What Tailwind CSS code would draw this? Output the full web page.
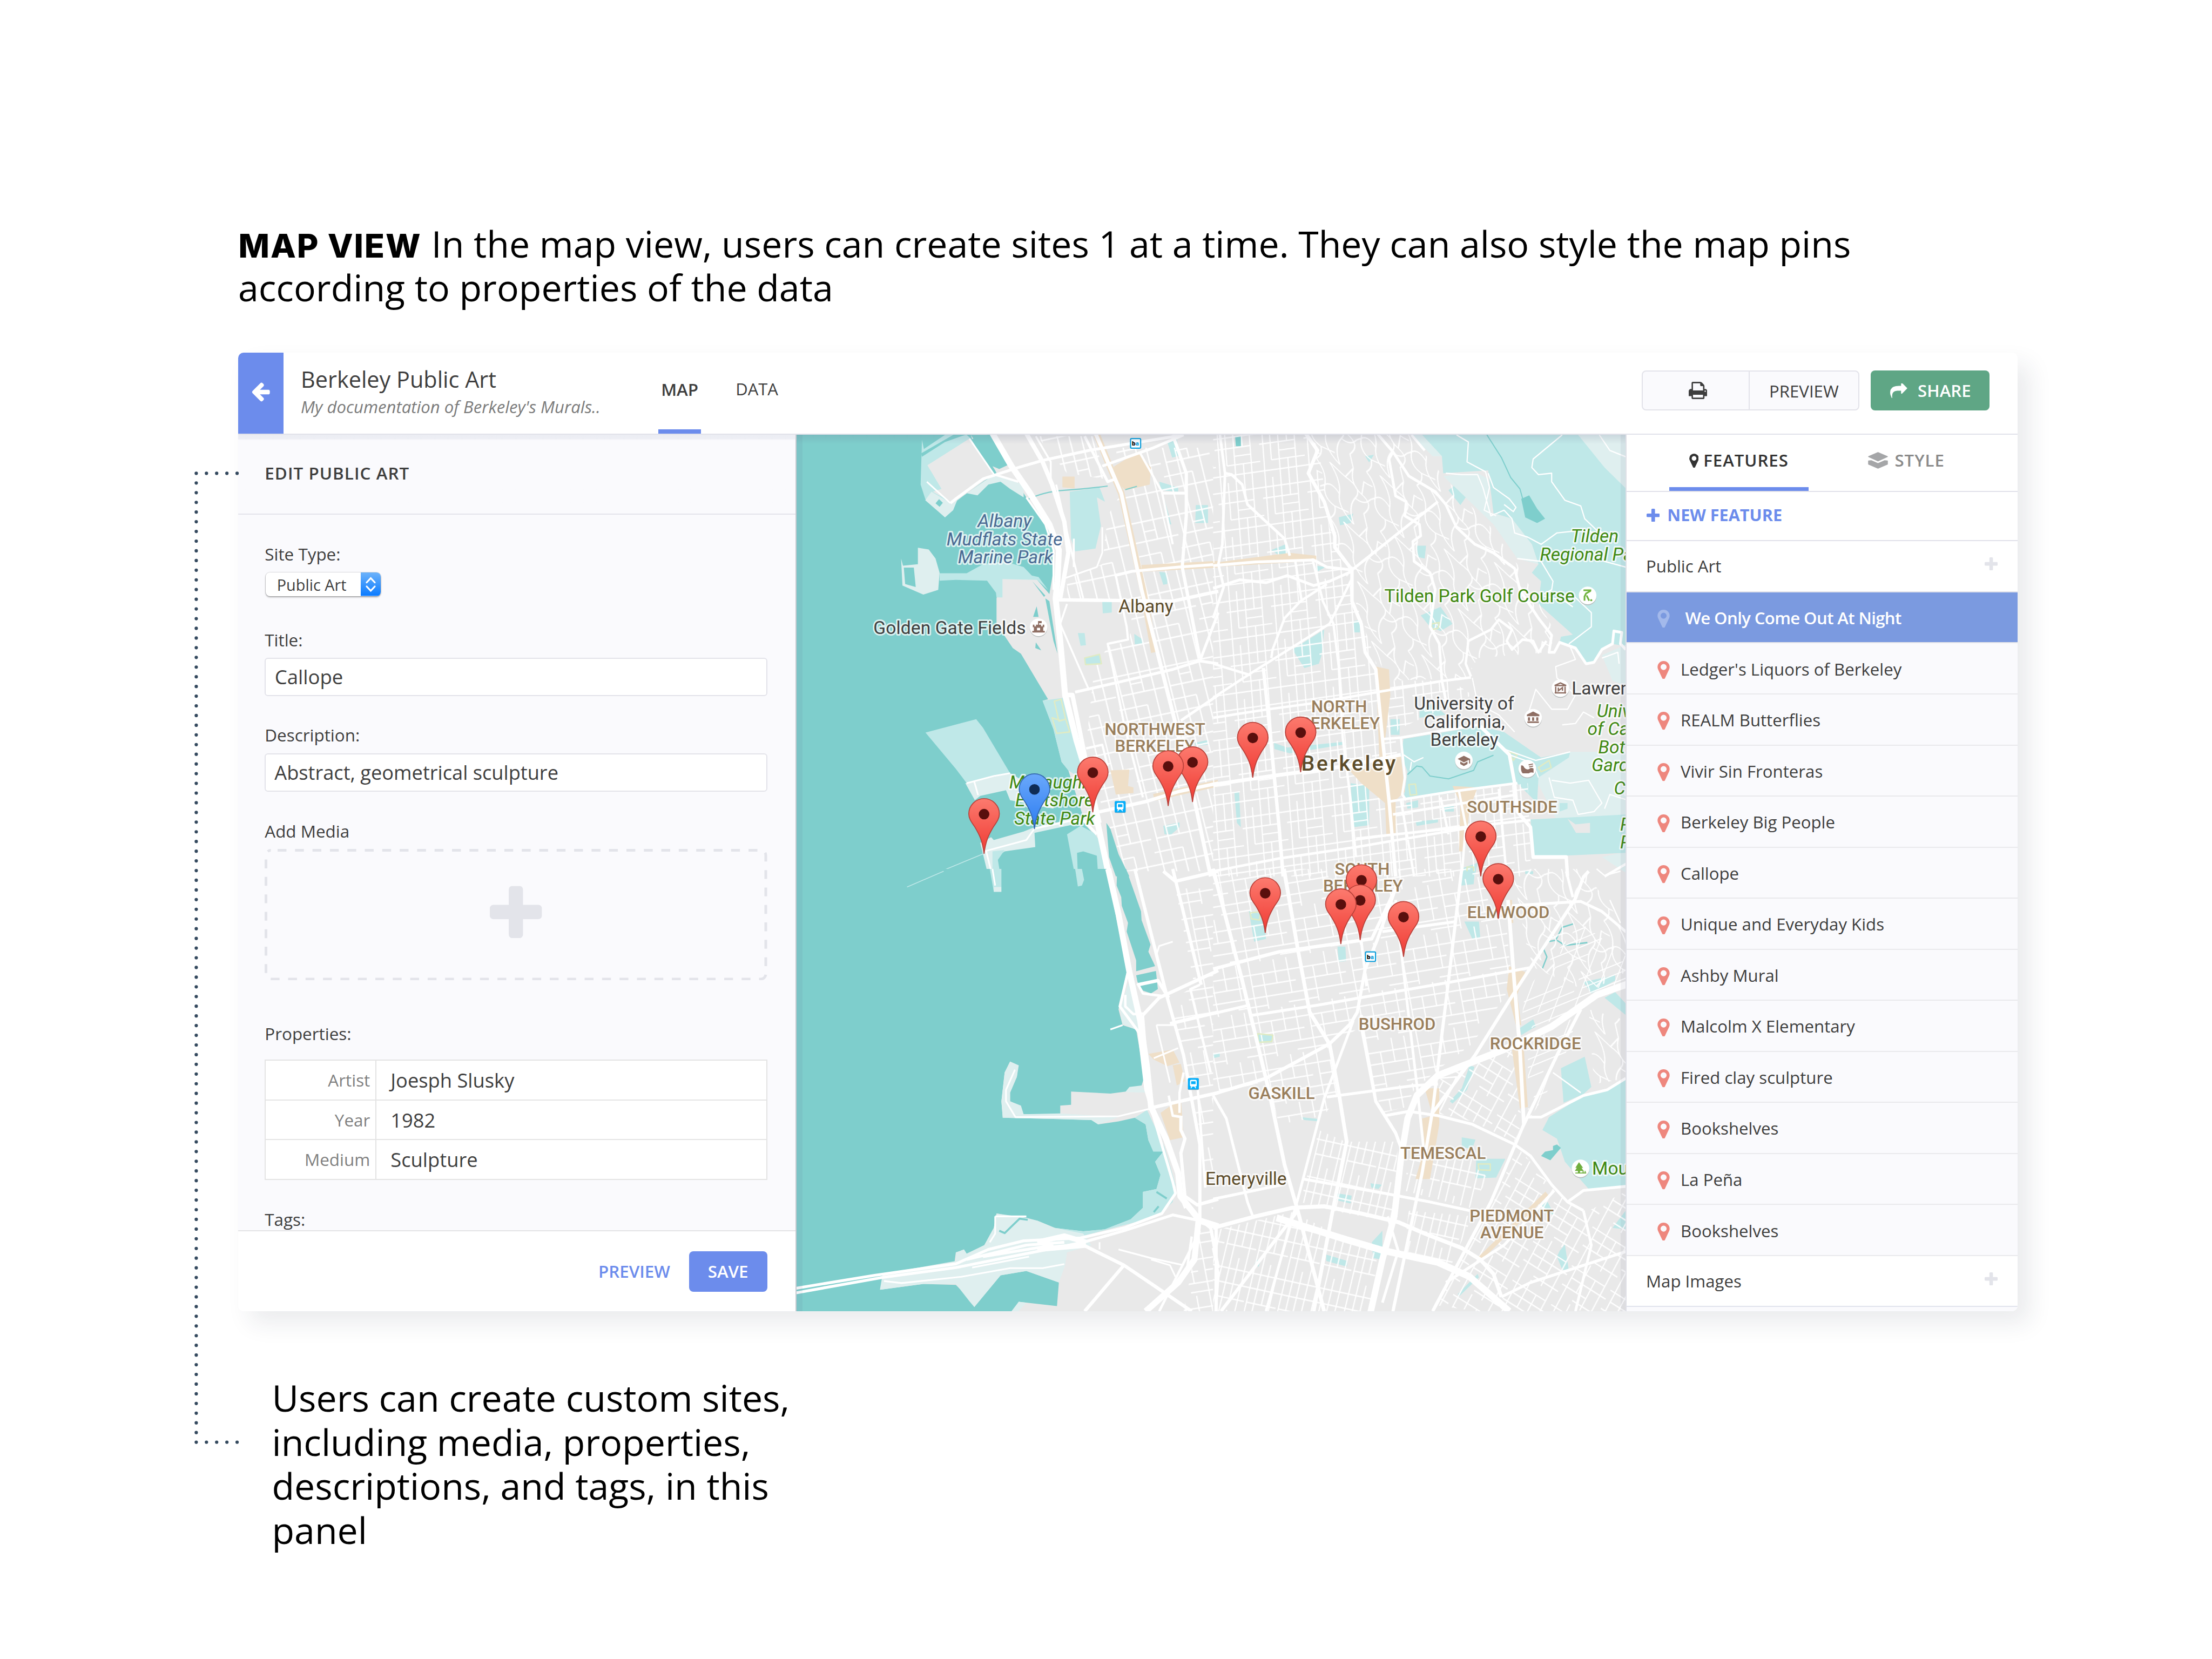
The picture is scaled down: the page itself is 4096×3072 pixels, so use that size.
<!DOCTYPE html>
<html lang="en">
<head>
<meta charset="utf-8">
<title>Berkeley Public Art</title>
<script src="https://cdn.jsdelivr.net/npm/@tailwindcss/browser@4"></script>
</head>
<body class="bg-white">
<svg class="hidden">
  <symbol id="marker" viewBox="0 128 1024 1536"><path fill="currentColor" d="M768 640q0-106-75-181t-181-75-181 75-75 181 75 181 181 75 181-75 75-181zm256 0q0 109-33 179l-364 774q-16 33-47.5 52t-67.5 19-67.5-19-46.5-52l-365-774q-33-70-33-179 0-212 150-362t362-150 362 150 150 362z"/></symbol>
  <symbol id="plus" viewBox="192 128 1408 1408"><path fill="currentColor" d="M1600 736v192q0 40-28 68t-68 28h-416v416q0 40-28 68t-68 28h-192q-40 0-68-28t-28-68v-416h-416q-40 0-68-28t-28-68v-192q0-40 28-68t68-28h416v-416q0-40 28-68t68-28h192q40 0 68 28t28 68v416h416q40 0 68 28t28 68z"/></symbol>
</svg>
<div class="relative w-[4096px] h-[3072px] overflow-hidden bg-white font-['Open_Sans',sans-serif] text-[#3e3e3e]">
  <!-- dotted connector between the edit panel and its caption -->
  <svg class="absolute left-[355px] top-[868px] w-[92px] h-[1812px]" viewBox="355 868 92 1812" fill="none" stroke="#34495e" stroke-width="6.2" stroke-linecap="round"><path d="M363.4 876.4V2671" stroke-dasharray="0.01 17.932"/><path d="M382.3 876.4H440M382.3 2670.5H440" stroke-dasharray="0.01 18.9"/></svg>

  <div class="flex flex-col pl-[441px] pt-[409.7px]">
    <h1 class="w-[3150px] h-[163.2px] text-[68px] leading-[81.6px] font-normal text-black whitespace-nowrap"><span class="font-['Inter',sans-serif] font-extrabold text-[61px] leading-0 tracking-[1.9px] ml-[0.5px] inline-block w-[339.500px]">MAP VIEW</span> In the map view, users can create sites 1 at a time. They can also style the map pins<br>according to properties of the data</h1>

    <main class="mt-[80.300px] w-[3294.5px] h-[1775.3px] rounded-[10px] bg-white shadow-[22px_22px_44px_rgba(30,38,60,0.095)]">
      <div class="w-full h-full rounded-[10px] overflow-hidden flex flex-col">
        <header class="relative z-10 flex items-stretch h-[152px] border-b-[2.4px] border-[#e1e2ea] bg-white shrink-0">
          <a class="w-[84px] bg-[#6c8cec] text-white flex items-center justify-center pb-[4px]"><svg class="w-[34.5px] h-[36px]" viewBox="192 154 1472 1612"><path fill="currentColor" d="M1664 896v128q0 53-32.5 90.5t-84.5 37.5h-704l293 294q38 36 38 90t-38 90l-75 76q-37 37-90 37-52 0-91-37l-651-652q-37-37-37-90 0-52 37-91l651-650q38-38 91-38 52 0 90 38l75 74q38 38 38 91t-38 91l-293 293h704q52 0 84.5 37.5t32.5 90.5z"/></svg></a>
          <div class="pl-[32px] pt-[25px] w-[667px] whitespace-nowrap">
            <div class="text-[41.4px] leading-[48px]">Berkeley Public Art</div>
            <div class="mt-[7px] text-[31.1px] leading-[40px] italic text-[#7b7b7b]">My documentation of Berkeley's Murals..</div>
          </div>
          <nav class="flex text-[31.4px] pl-[27.2px]">
            <a class="w-[79px] border-b-[8px] border-[#6c8cec] flex items-center justify-center font-semibold pb-[7px]">MAP</a>
            <a class="ml-[64px] flex items-center pb-[15px] text-[31px]">DATA</a>
          </nav>
          <div class="ml-auto mr-[52px] mt-[33.2px] h-[74.1px] flex text-[31.2px]">
            <div class="flex border-[2.4px] border-[#e3e3ea] rounded-[8px] bg-[#fafafd] w-[403.5px]">
              <div class="w-[198px] border-r-[2.4px] border-[#e3e3ea] flex items-center justify-center pl-[9px]"><svg class="w-[34.5px] h-[32px]" viewBox="64 128 1664 1536"><path fill="currentColor" d="M448 1536h896v-256h-896v256zm0-640h896v-384h-160q-40 0-68-28t-28-68v-160h-640v640zm1152 64q0-26-19-45t-45-19-45 19-19 45 19 45 45 19 45-19 19-45zm128 0v416q0 13-9.5 22.5t-22.5 9.5h-224v160q0 40-28 68t-68 28h-960q-40 0-68-28t-28-68v-160h-224q-13 0-22.5-9.5t-9.5-22.5v-416q0-79 56.5-135.5t135.5-56.5h64v-544q0-40 28-68t68-28h672q40 0 88 20t76 48l152 152q28 28 48 76t20 88v256h64q79 0 135.5 56.5t56.5 135.5z"/></svg></div>
              <div class="flex-1 flex items-center justify-center pt-px">PREVIEW</div>
            </div>
            <div class="ml-[21px] w-[219.4px] rounded-[8px] bg-[#5fa685] text-white font-semibold flex items-center pl-[36px]"><svg class="w-[31.5px] h-[27px]" viewBox="0 128 1792 1536"><path fill="currentColor" d="M1792 640q0 26-19 45l-512 512q-19 19-45 19t-45-19-19-45v-256h-224q-98 0-175.5 6t-154 21.5-133 42.5-105.5 69.5-80 101-48.5 138.5-17.5 181q0 55 5 123 0 6 2.5 23.5t2.5 26.5q0 15-8.5 25t-23.5 10q-16 0-28-17-7-9-13-22t-13.5-30-10.5-24q-127-285-127-451 0-199 53-333 162-403 875-403h224v-256q0-26 19-45t45-19 45 19l512 512q19 19 19 45z"/></svg><span class="ml-[19.5px]">SHARE</span></div>
          </div>
        </header>

        <div class="flex flex-1 min-h-0">
          <!-- edit panel -->
          <section class="w-[1034px] border-r-[2.6px] border-[#c9cbd1] bg-[#fafafd] flex flex-col shrink-0">
            <div class="h-[147.7px] border-b-[2.4px] border-[#e4e4eb] pl-[49.3px] flex items-center pb-[4px] text-[31.4px] font-semibold tracking-[1.03px] bg-linear-to-b from-[#ebedf3] from-0% via-[#edeef4] via-5% to-[#fafafd] to-7% shrink-0">EDIT PUBLIC ART</div>
            <form class="flex-1 min-h-0 overflow-hidden pl-[49.3px] w-[980px] pt-[53.500px] text-[31.4px] leading-[40px]">
              <div>Site Type:</div>
              <div class="ml-[1.500px] mt-[14px] w-[213.3px] h-[43.5px] bg-white rounded-[8px] shadow-[0_2px_3px_rgba(0,0,0,0.3),0_0_0_1px_rgba(0,0,0,0.12)] flex overflow-hidden">
                <span class="w-[176.3px] pl-[21px] text-[28.8px] leading-[46px]">Public Art</span>
                <svg class="w-[37px] h-[43.5px]" viewBox="0 0 37 43.5"><defs><linearGradient id="sel" x2="0" y2="1"><stop stop-color="#6cb2fa"/><stop offset="1" stop-color="#0a7bff"/></linearGradient></defs><path fill="url(#sel)" d="M0 0h37v43.500h-37z"/><path d="M11 18.500l7.500-8 7.500 8M11 26l7.500 8 7.500-8" fill="none" stroke="#fff" stroke-width="3.200" stroke-linecap="round"/></svg>
              </div>
              <div class="mt-[61.1px]">Title:</div>
              <div class="mt-[13.1px] h-[70.8px] border-[2.4px] border-[#e3e3ea] rounded-[6px] bg-white pl-[16.500px] pb-[1px] flex items-center text-[36.5px]">Callope</div>
              <div class="mt-[52.4px]">Description:</div>
              <div class="mt-[13.6px] h-[70.8px] border-[2.4px] border-[#e3e3ea] rounded-[6px] bg-white pl-[16px] pb-[1px] flex items-center text-[36.2px]">Abstract, geometrical sculpture</div>
              <div class="mt-[53.4px]">Add Media</div>
              <div class="mt-[12.6px] h-[243.4px] text-[#e3e4ea]"><svg class="w-[930.5px] h-[243.4px]" viewBox="0 0 930.5 243.4"><rect x="2.500" y="2.500" width="925.500" height="238.400" rx="9" fill="none" stroke="#e3e4ea" stroke-width="5" stroke-dasharray="16.400 15.900" stroke-dashoffset="-12.500"/><use href="#plus" x="416.900" y="68.400" width="96.700" height="96.700"/></svg></div>
              <div class="mt-[78.500px]">Properties:</div>
              <div class="mt-[28.600px] w-[930.5px] bg-white border-t-[2.4px] border-x-[2.4px] border-[#e4e4e4]">
                <div class="flex h-[73.7px] border-b-[2.4px] border-[#e4e4e4] items-stretch"><span class="w-[205px] border-r-[2px] border-[#e4e4e4] pr-[10px] flex items-center justify-end text-[#808080]">Artist</span><span class="pl-[26px] flex items-center text-[36.3px]">Joesph Slusky</span></div>
                <div class="flex h-[73.7px] border-b-[2.4px] border-[#e4e4e4] items-stretch"><span class="w-[205px] border-r-[2px] border-[#e4e4e4] pr-[10px] flex items-center justify-end text-[#808080]">Year</span><span class="pl-[26px] flex items-center text-[36.3px]">1982</span></div>
                <div class="flex h-[73.7px] border-b-[2.4px] border-[#e4e4e4] items-stretch"><span class="w-[205px] border-r-[2px] border-[#e4e4e4] pr-[10px] flex items-center justify-end text-[#808080]">Medium</span><span class="pl-[26px] flex items-center text-[36.3px]">Sculpture</span></div>
              </div>
              <div class="mt-[52.5px]">Tags:</div>
            </form>
            <div class="h-[150.8px] border-t-[2.4px] border-[#e4e4e6] bg-white flex items-center justify-end pr-[52.500px] text-[31.3px] font-semibold shrink-0">
              <span class="text-[#6c8cec]">PREVIEW</span>
              <span class="ml-[35px] w-[144.7px] h-[74.9px] rounded-[8px] bg-[#6c8cec] text-white flex items-center justify-center">SAVE</span>
            </div>
          </section>

          <!-- map -->
          <section class="relative w-[1535px] shrink-0 overflow-hidden bg-[#7ececc]">
            <svg class="w-[1535px] h-[1623.7px] block" viewBox="1536.500 838 1599 1691.500" preserveAspectRatio="none" font-family="Roboto, sans-serif">
              <defs>
                <pattern id="g1" width="180" height="250" patternUnits="userSpaceOnUse" patternTransform="matrix(1 -0.2 0.26 1 0 0)"><path d="M20 0V250M62 0V250M104 0V118M104 165V250M142 0V250M0 50H180M20 118H180M0 165H104M0 208H180M62 85H104" fill="none" stroke="#fff" stroke-width="5"/></pattern>
                <pattern id="g2" width="168" height="190" patternUnits="userSpaceOnUse" patternTransform="matrix(1 -0.13 0.08 1 0 0)"><path d="M14 0V190M42 0V130M72 0V190M104 0V70M104 130V190M134 0V190M0 32H168M0 70H134M42 130H168M0 165H168M72 100H134" fill="none" stroke="#fff" stroke-width="4.500"/></pattern>
                <pattern id="g3" width="190" height="165" patternUnits="userSpaceOnUse" patternTransform="matrix(1 -0.15 0.2 1 0 0)"><path d="M18 0V122M66 0V165M112 42V165M160 0V82M0 42H190M66 82H190M0 82H40M0 122H190M0 152H112" fill="none" stroke="#fff" stroke-width="4.500"/></pattern>
                <pattern id="g4" width="190" height="170" patternUnits="userSpaceOnUse" patternTransform="matrix(1.2 -0.45 -0.5 1.2 0 0)"><path d="M25 0V170M85 0V90M85 130V170M140 0V170M0 34H140M25 68H190M0 95H190M85 130H190" fill="none" stroke="#fff" stroke-width="3.800"/></pattern>
                <pattern id="g7" width="170" height="150" patternUnits="userSpaceOnUse" patternTransform="matrix(0.86 0.5 -0.52 0.9 0 0)"><path d="M20 0V150M62 0V105M104 35V150M145 0V150M0 35H145M20 70H170M0 105H104M62 135H170" fill="none" stroke="#fff" stroke-width="4.500"/></pattern>
                <pattern id="g5" width="120" height="180" patternUnits="userSpaceOnUse" patternTransform="matrix(1 0.2 -0.26 1 0 0)"><path d="M10 0V180M38 0V180M66 0V140M96 0V180M0 40H120M0 90H120M10 140H120" fill="none" stroke="#fff" stroke-width="4.500"/></pattern>
                <pattern id="g6" width="190" height="210" patternUnits="userSpaceOnUse" patternTransform="matrix(1 0.25 0.25 1 0 0)"><path d="M10 0Q40 40 20 90T40 160Q40 190 10 210M60 0Q90 60 70 110T100 210M100 210Q90 150 130 110T110 40L60 0M150 0Q120 60 160 90T150 160L150 210M20 90Q50 70 70 110M130 110Q160 130 190 100M0 100L20 90M40 160L90 170M110 40Q130 20 150 0M160 90L180 40L190 45M0 45L20 50" fill="none" stroke="#fff" stroke-width="4.500" stroke-linejoin="round"/></pattern>
                <linearGradient id="red" x2="0" y2="1"><stop stop-color="#fc7a6e"/><stop offset="1" stop-color="#ef3a33"/></linearGradient>
                <linearGradient id="blue" x2="0" y2="1"><stop stop-color="#6aa8fb"/><stop offset="1" stop-color="#2c7cf0"/></linearGradient>
                <linearGradient id="hs" x2="0" y2="1"><stop stop-color="#5a5f80" stop-opacity=".16"/><stop offset="1" stop-color="#5a5f80" stop-opacity="0"/></linearGradient>
                <g id="pr"><path d="M0 0C-3-25-9-37-18-52C-25-62-29.500-68-29.500-77A29.500 29.500 0 0 1 29.500-77C29.500-68 25-62 18-52C9-37 3-25 0 0Z" fill="url(#red)" stroke="#b9413a" stroke-width="1.800"/><circle cy="-76.500" r="10.200" fill="#590f0d"/></g>
                <g id="pb"><path d="M0 0C-3-25-9-37-18-52C-25-62-29.500-68-29.500-77A29.500 29.500 0 0 1 29.500-77C29.500-68 25-62 18-52C9-37 3-25 0 0Z" fill="url(#blue)" stroke="#3467b0" stroke-width="1.800"/><circle cy="-76.500" r="10.200" fill="#0f2c55"/></g>
                <g id="bus"><rect x="-10.500" y="-10" width="21" height="22" rx="2" fill="#8fa3ad"/><rect x="-10.500" y="-11" width="21" height="22" rx="2" fill="#06aef9"/><rect x="-6.500" y="-7.500" width="13" height="13" rx="2.500" fill="#fff"/><rect x="-4.300" y="-4.800" width="8.600" height="5.500" fill="#06aef9"/><path d="M-5 8.500l2.500-3M5 8.500l-2.500-3" stroke="#fff" stroke-width="1.600"/></g>
                <g id="bart"><rect x="-9.700" y="-9.200" width="19.400" height="18.400" rx="2" fill="#fff" stroke="#0e9fdb" stroke-width="2.300"/><text x="-7" y="4.500" font-size="12" font-weight="900">b</text><text x="0" y="4.500" font-size="12" font-weight="900" fill="#0e9fdb">a</text></g>
                <g id="disc"><circle cy="1.800" r="17" fill="#b9bdbd"/><circle r="17" fill="#fff"/></g>
              </defs>
              <path fill="#e9e9e9" d="M1536 838h1600v1692h-1600z"/>

              <!-- north-west quarter -->
              <g transform="matrix(0.52296 0 0 0.54847 1530 830)" stroke-linejoin="round">
                <path fill="#7ececc" d="M0 0H718L790 122L760 135L735 125L745 140L765 180L840 205L870 250L910 300L955 370L962 480L945 575L900 525L880 510L770 520L750 590L750 680L810 765L840 785L940 945L920 950L960 1050L990 1165L1015 1195L1060 1330L1080 1390L1120 1430L1150 1560H0Z"/>
                <path fill="#bfe8e8" d="M475 32L482 65L560 15H640L655 28L735 150L600 250L560 305L487 240L470 190ZM540 502L640 502L700 470L780 460L850 480L880 510L905 515L940 560L900 525L772 522V587H750L748 570L715 528L600 525L540 528ZM920 950L995 940L1065 1150L1070 1230L1015 1195L990 1165L960 1050ZM488 1062L675 1015L700 1045L800 1205L640 1240L600 1190ZM1010 1420L1060 1390L1110 1415L1135 1450L1160 1568H1125L1120 1495L1070 1480L1047 1485L1050 1568H1040Z"/>
                <path fill="#7ececc" d="M472 80L600 10H650L560 40L475 92Z"/>
                <path fill="#dfefef" d="M510 215L487 245L560 305L590 280L605 245L580 255ZM640 220L740 155L850 190L850 235L800 205L765 180L720 190L680 228ZM460 412L500 418L525 450L540 500L535 560L480 577L403 545L398 450L405 475L460 470ZM635 1240L800 1205L900 1260L960 1290V1330L800 1300L785 1265L690 1285L670 1300ZM690 1450L730 1430L740 1440L850 1410L890 1395L1060 1360V1380L890 1415L893 1465L780 1480L750 1500L755 1568H720Z"/>
                <path fill="#bfe8e8" d="M735 1480L780 1475L755 1510L765 1568H735Z"/>
                <path fill="#7ececc" d="M408 482H445L452 550L413 540ZM538 241L552 254L540 268L525 256ZM882 530L930 580L925 585ZM898 618L905 655H885ZM895 745L915 773L893 765ZM930 590L945 600L975 785L960 740ZM1155 1380L1170 1400L1200 1490L1240 1568H1190L1165 1500Z"/>
                <path fill="#e9e9e9" d="M495 122L650 28L738 155L700 180L590 255L515 215L547 205ZM655 15H718L660 30Z"/>
                <path fill="#7ececc" d="M655 15H718L790 122L735 125Z"/>
                <path fill="#bfe8e8" d="M1020 215L1130 200L1150 250L1120 235L1135 335L1115 415L1040 425L1025 380ZM1380 40L1415 28L1425 88L1398 95ZM1350 180L1420 200V215L1360 210L1395 330H1388ZM1485 262H1530V325H1483ZM1350 497L1380 500V540L1365 542ZM1140 600L1175 595V640L1142 643ZM1050 712H1075L1080 755L1060 757ZM1258 715L1290 735L1292 752H1260ZM1365 1390L1425 1378V1395L1395 1420H1370ZM1480 1098L1530 1088V1105L1485 1110Z"/>
                <path fill="url(#g1)" d="M1190 60H1549V1550H1230L1140 1330L1080 1110L1110 840L1160 760L1240 740L1250 640L1400 600L1010 590V520L1140 470L1160 300L1210 220ZM900 20H1110L1150 170L1010 150Z"/>
                <path fill="none" stroke="#efdfc8" d="M1120 15L1165 120L1210 220L1290 560L1332 780M1285 485L1568 470M1330 1290L1568 1240" stroke-width="24"/>
                <path fill="#efdfc8" d="M1185 125L1270 75L1320 130L1315 190L1225 210L1170 150ZM993 162H1038V203L993 200ZM1170 1195L1240 1192L1235 1250L1255 1255V1275L1190 1280Z"/>
                <path fill="#bfe8e8" stroke="#e0ebc4" stroke-width="5" d="M1075 800L1130 787L1137 820L1078 823Z"/>
                <path fill="none" stroke="#e0ebc4" stroke-width="5" d="M963 952L988 945L1005 1015L980 1022ZM955 1010L985 1020L1005 1015L1020 1060L972 1065Z"/>
                <path fill="none" stroke="#7ececc" stroke-width="4" d="M860 245Q920 215 1000 210T1160 195M1225 208L1268 196"/>
                <g fill="none" stroke="#fff">
                  <path stroke-width="22" d="M735 10L805 125L870 215L945 330L980 420L975 530L968 590L985 740L1003 930L1045 1090L1080 1200L1125 1390L1150 1500L1165 1568"/>
                  <path stroke-width="16" d="M860 10L920 110L955 190L1000 320L1015 430L985 590M1005 930L1030 930L1090 1210L1130 1380"/>
                  <path stroke-width="7" d="M860 235L930 330L960 420V560M970 190L1030 440L1070 590M1010 610L985 680L1090 910M1035 380V480M895 20L950 110V180"/>
                  <path stroke-width="14" d="M1115 10L1210 220L1285 560L1370 880L1410 1030L1450 1200L1480 1300L1540 1568"/>
                  <path stroke-width="12" d="M960 595L1150 597L1400 600L1568 565M1110 1345L1300 1305L1420 1270L1568 1240M1400 15L1450 150V300L1435 480L1500 800"/>
                  <path stroke-width="10" d="M580 255L600 240L700 170L830 130L920 105L1090 70L1440 15M1185 510L1250 495L1420 480L1568 470M1040 920L1200 885L1400 840L1500 810L1568 820M1140 125L1330 60L1440 15M1360 220H1445M1075 20L1160 180L1190 170M1430 1020L1568 930M1070 1370L1120 1420M1500 810L1568 640"/>
                  <path stroke-width="8" d="M1190 510L1230 690L1235 735L1160 750L1180 840L1220 1030L1290 1290M745 155L830 180M1080 1118L1140 1105L1160 1180M1280 80L1360 215L1400 400"/>
                  <path stroke-width="6" d="M650 28L745 160M493 180L580 255M640 1240L740 1215L800 1205M668 1235L682 1282M705 1480L860 1440L890 1400L1060 1365M712 1480L735 1568M1140 340V430L1120 480L1000 520"/>
                  <path stroke="#bfe8e8" stroke-width="3" d="M500 1568L705 1487"/>
                </g>
              </g>

              <!-- north-east quarter -->
              <g transform="matrix(0.5102 0 0 0.54847 2340 830)" stroke-linejoin="round">
                <path fill="#bfe8e8" d="M790 15H1380L1568 210V760L1510 750L1470 770L1440 820H1410L1370 765L1310 745L1315 725L1360 718L1230 610L1240 530L1205 500L1230 470L1205 400L1130 310L1060 290L1040 140L870 150L865 90Z"/>
                <path fill="#dfefef" d="M1380 15H1568V210L1480 130ZM870 160L1000 150L1040 170L1050 290L1130 310L1205 400L1230 470L1150 450L1060 330L960 240ZM750 15H790L865 90L830 90ZM1470 790L1568 750V900L1510 880ZM1210 1210L1350 1130H1568V1350L1300 1370ZM1470 1500L1568 1480V1560Z"/>
                <path fill="#bfe8e8" d="M720 1085L1010 1040L1100 1060L1240 1150L1350 1130L1345 1150L1230 1220L1225 1310L1150 1240L720 1300L735 1200L710 1140ZM1200 1368L1568 1350V1485L1215 1500ZM1310 1310L1340 1310L1340 1330L1310 1340ZM520 1240L590 1250V1388L530 1395ZM300 770L420 700L410 790L400 820L345 835ZM785 650L860 620L905 680L860 705L820 690ZM475 305L530 292L520 325L480 333ZM220 420L280 398L290 432L250 440ZM230 1098L280 1115L490 1095V1105L290 1135L232 1120ZM770 405H805L800 450L775 445ZM532 670L555 665V710H530ZM670 1015H705V1070H672ZM80 1270H98L105 1395L90 1380ZM780 980L830 960L880 1000L780 1010ZM575 90L608 85L590 112ZM890 210L910 195L955 235L935 262ZM870 1320L910 1315V1340H875ZM730 1310L775 1300V1325L735 1330ZM390 475L425 480L395 495ZM940 1540L1000 1520L990 1568H940ZM765 1375L850 1368V1378L770 1390Z"/>
                <path fill="#7ececc" d="M1165 240L1195 228L1225 275L1255 310L1225 325L1180 305ZM83 20H105V55H86Z"/>
                <path fill="url(#g2)" d="M0 15H360L400 60L440 340L560 660L640 880L900 880L980 930L700 1050L690 1080L710 1300L1190 1240L1200 1500V1568H0Z"/>
                <path fill="url(#g6)" d="M360 15H740L870 160L1050 340L1150 470L1300 720L1260 780L1000 800L960 870L660 880L560 660L440 340Z"/>
                <path fill="#efdfc8" d="M0 465L290 430L390 440V458L0 480ZM615 830L665 840L670 930L650 1090L645 1140L710 1145L725 1270L690 1300L690 1420H655L650 1310L560 1240L510 1190H630ZM905 1250L1000 1255L970 1330L950 1480H930L935 1310Z"/>
                <path fill="none" stroke="#7ececc" stroke-width="4" d="M1035 15L1090 95L1125 165L1160 205L1172 245M735 1210L770 1180L790 1183L820 1215L890 1225L985 1195L1000 1165L1060 1142"/>
                <path fill="none" stroke="#e0ebc4" stroke-width="5" d="M740 1245L765 1243L770 1280L745 1282ZM1120 1130L1150 1140L1135 1160ZM1230 1185L1270 1160L1278 1185L1240 1200ZM825 680L855 675L850 695L828 700ZM960 1535H985V1568H960Z"/>
                <g fill="none" stroke="#fff">
                  <path stroke-width="13" d="M350 10L395 70L360 150L390 200L420 250L460 370V410L525 490V600L560 680L575 780L615 840L640 1080L665 1300L690 1568M0 1245L220 1215L500 1180L710 1140M190 835L215 1060L250 1400L265 1568M1010 1040L1120 1140L1140 1240L1150 1340L1200 1395L1210 1500H1335L1340 1568"/>
                  <path stroke-width="10" d="M25 10L45 150L35 400L20 470L40 550L0 660M45 150L70 155L110 190L130 260L270 380L290 440M0 475L160 462L380 455L430 480L525 490M0 555L100 525L200 535L280 510L380 545L440 530L525 495M525 490L620 420L850 250M620 10L680 75L740 160L840 215L880 260L920 340L990 400L1060 430L1140 485L1160 560L1230 660L1280 720L1270 780H1290L1310 745L1370 765L1410 820L1440 815L1470 770L1510 750L1515 705L1545 710L1540 750L1560 770M680 75L665 100L690 230L730 250L725 300L780 330L785 370L755 390L760 460L820 500L840 560L820 690L855 750L865 880L880 950"/>
                  <path stroke-width="9" d="M975 865L955 820L965 740L1050 700L1080 665L1130 700L1110 740L1130 770L1170 735L1210 740L1230 780L1260 740M0 940L140 855L440 680L525 520M0 820L140 860M220 800L225 770L270 660L330 600L430 540M310 455L335 600M375 450L415 600L455 680L475 830L490 1080L520 1300L540 1500M0 1010L210 980L370 960L620 920L870 880L975 868M640 1085L710 1080L1000 1035M710 1080L725 1220L715 1280L730 1300M665 1305L900 1270L1150 1240M680 1350L1150 1280M540 1435L1200 1370M0 1550L250 1505L540 1465L950 1400M940 1568L955 1390L930 1270M860 1290L890 1420M1080 1260L1095 1420L1110 1568M710 1300L760 1568M1480 1568L1568 1520M750 15L800 70"/>
                  <path stroke-width="4.500" d="M920 15L965 40L960 110L1030 145L1045 200L1025 280L1070 300M1320 15L1210 100L1205 130L1230 155L1280 150V180L1330 245L1390 265L1405 310L1450 350L1530 380M1460 15L1500 70L1568 95M1130 310L1140 360L1190 375L1240 400L1300 360L1400 350L1490 370M1150 450L1240 460L1285 530L1280 560L1240 580L1330 600L1360 620M1350 570L1430 640V690L1345 750M880 150L940 155L1000 155L1020 200L1050 300L1100 280L1130 310M1040 150L1060 200L1120 240L1145 270L1135 285L1100 260M1480 460L1560 480M1190 1000L1220 910L1280 980H1340L1370 930L1300 870L1295 830L1370 805L1350 760M1320 1035L1370 1030L1400 990L1440 1010M980 870L1000 960L1080 1000L1140 1060M1270 1220L1290 1290L1360 1300L1380 1350L1440 1340L1470 1310L1420 1230L1350 1240L1280 1230M1480 1330L1500 1280L1568 1300M1100 1120L1220 1160L1350 1130M1120 1140L1210 1170L1230 1220M720 1140L760 1165L795 1150M750 1165L745 1195M1470 800L1530 780L1535 820"/>
                </g>
                <path fill="#e9e9e9" d="M1340 1365L1370 1385L1425 1380V1415H1372Z"/>
              </g>

              <!-- south-west quarter -->
              <g transform="matrix(0.52296 0 0 0.55485 1530 1680)" stroke-linejoin="round">
                <path fill="#7ececc" d="M0 -8H1155L1200 200L1230 350L1200 480L1215 535L1265 550L1295 715L1285 745L1235 765L1170 773L1025 766V812L985 815V845H850L830 815L800 800V770L825 715L830 675L800 662L780 700L768 800L773 857L980 862L1100 865L1125 880L1200 870L1260 857L1300 880L1310 935L1328 970L1365 975L1335 1010L1355 1055L1340 1105L1290 1115V1170L1245 1210L1150 1245L1070 1252L965 1240L900 1215L860 1210L750 1190L740 1240L705 1300L640 1330L600 1325L595 1360L330 1400L320 1455L480 1435L600 1438L655 1490L668 1515L765 1405L860 1390L980 1430L973 1512L832 1497L805 1535H0ZM0 1455L330 1405L320 1470L0 1500Z"/>
                <path fill="#bfe8e8" d="M725 -8H768V55L740 72ZM1040 -8H1065L1073 30L1065 50L1050 53ZM1260 857L1305 830L1370 960L1410 1090L1400 1150L1345 1200L1060 1270L960 1260L965 1240L1070 1252L1150 1245L1245 1210L1290 1170V1115L1340 1105L1355 1055L1335 1010L1365 975H1328L1310 935L1300 880Z"/>
                <path fill="#dfefef" d="M740 55H768V72H740ZM800 662L832 675L825 715L800 770V800L840 815L850 845L985 842L1200 855L1125 880L1100 865L980 862L773 857L768 800L780 700ZM1240 380L1285 560L1215 530L1205 480ZM1225 768L1240 750L1285 745L1300 770ZM750 1190L860 1205L900 1215L965 1240L1070 1260L1100 1300L1010 1325L1003 1370L980 1430L860 1390L765 1405L668 1515L650 1495L600 1435L480 1435L320 1455L330 1400L600 1355V1325L630 1315L640 1330L705 1300L740 1240ZM805 1530L832 1497L860 1500L830 1530Z"/>
                <path fill="none" stroke="#7ececc" stroke-width="7" d="M760 1250L780 1258L835 1208L865 1212M1330 1185L1348 1165M1340 1115L1378 1138"/>
                <path fill="#7ececc" d="M1195 -8H1228L1283 140L1285 170L1318 255L1310 280L1335 330L1265 348L1265 310L1230 210L1235 180L1212 120L1210 90L1193 50ZM1265 362L1338 347L1345 410L1320 425L1290 415L1270 385Z"/>
                <path fill="url(#g3)" d="M1410 60H1549V1180L1520 1130L1500 900L1450 700L1390 450L1480 400ZM1500 1230H1549V1530H1440Z"/>
                <path fill="#efdfc8" d="M1310 635L1400 620L1425 665L1380 678L1330 655ZM1400 675L1430 670L1445 730L1415 745ZM1355 840L1430 790L1440 925L1390 935Z"/>
                <g fill="none" stroke="#fff">
                  <path stroke-width="22" d="M1162 -8L1200 150L1240 350L1280 520L1305 680L1320 820L1375 930L1420 1050L1428 1130L1500 1215L1568 1235M1495 1215L1480 1350L1420 1430L1300 1530"/>
                  <path stroke-width="10" d="M1235 350L1205 470L1240 515L1275 560L1300 760L1400 1080L1410 1120L1360 1190L1220 1240L1060 1275L850 1285L720 1315L600 1365L300 1405L10 1450M10 1466L330 1412L600 1378L900 1322L1070 1290L1220 1250L1400 1195L1500 1215M640 1350L860 1300L1000 1290M700 1340L960 1300"/>
                  <path stroke-width="18" d="M900 1290L1000 1268L1080 1290M900 1315L1080 1300M1430 1120L1450 1170"/>
                  <path stroke-width="12" d="M1400 -8L1505 395M1260 -8L1380 440L1440 640L1500 950V1210L1540 1240L1568 1380M1270 395L1345 380L1385 440M1290 500L1350 440L1568 345M1390 530L1568 490M1310 825L1450 795L1568 770M1060 1295L1220 1370L1330 1440L1470 1530M1220 1370L1075 1530M1430 850V900L1445 930L1430 980L1445 1130L1490 1160L1568 1140M1545 -8L1568 60M1365 0L1410 35L1568 0M1560 1230V1530"/>
                  <path stroke-width="9" d="M1500 395L1465 410L1540 700M1290 500L1300 620M1440 700L1425 770V840M1385 780L1400 850L1435 855M1270 390L1290 425L1370 435M1225 430V470L1255 497L1290 495M1490 730L1520 1100M1470 1270L1450 1400L1310 1530M1500 1250L1350 1530"/>
                  <path stroke-width="6" d="M818 690L785 760V800L820 855L1200 852L1320 825M1340 290L1350 260L1400 245M735 -8L745 50M745 1200H860M745 1200L745 1260L725 1290M335 1425L400 1432L620 1410L800 1380L920 1380L1000 1366M660 1378L870 1340M1130 1290V1315M1200 1315L1320 1345L1440 1370M1320 1350L1390 1370L1410 1410M1170 550L1215 535M1340 535H1410M1340 535L1390 735M1330 650L1420 615"/>
                  <path stroke="#bfe8e8" stroke-width="3" d="M420 55L555 0"/>
                </g>
              </g>

              <!-- south-east quarter -->
              <g transform="matrix(0.5102 0 0 0.55485 2340 1680)" stroke-linejoin="round">
                <path fill="#bfe8e8" d="M135 138L190 150L200 235L155 245ZM470 262H500L503 312L475 316ZM950 175H1005L1010 230L980 235ZM1400 385L1520 362V380L1430 425ZM1480 440L1520 420L1560 460V500ZM1245 900L1270 855L1400 780L1490 760L1560 725V1095L1420 1105L1330 1010L1300 930ZM1315 685L1405 645L1430 750L1400 775L1325 805ZM995 1000H1105L1070 1065L992 1068ZM1160 545L1210 515L1220 540L1165 570ZM470 1120L524 1128L520 1155L472 1145ZM428 1333L508 1355L506 1375L428 1355ZM940 925L992 933L980 965L940 960ZM165 563L228 570L222 595L172 597ZM940 0H990L985 45L938 50ZM970 675L988 680L960 760L905 808L895 800L940 755ZM330 855L400 862V870L345 865ZM595 1085L638 1090L625 1105L598 1100ZM1310 1320L1330 1298L1345 1390L1320 1385L1300 1340ZM1510 1240L1560 1180V1245ZM1240 1150L1265 1150L1290 1195L1250 1185ZM0 635L25 632V645L0 650ZM600 1290L640 1250V1300L635 1350L605 1345ZM155 1370L165 1348L178 1360L172 1375ZM925 1470L1000 1400L1005 1412L930 1478ZM1180 0H1210V10H1180Z"/>
                <path fill="#7ececc" d="M1240 990L1255 975L1285 970V955L1300 950L1315 962L1275 1005Z"/>
                <path fill="none" stroke="#7ececc" stroke-width="5" d="M1362 183L1320 195L1295 240L1265 245L1250 272L1262 298L1245 338M1300 240L1330 258L1415 248"/>
                <path fill="url(#g3)" d="M0 -8H1090L1130 400L980 600L850 690L760 760L730 820L640 840L590 700L560 540L440 610L470 780L420 850L250 880L200 730L0 780Z"/>
                <path fill="url(#g4)" d="M1180 420L1280 300L1390 180L1568 300V380L1280 520L1160 560ZM1190 600L1380 500L1310 700L1190 870Z"/>
                <path fill="url(#g7)" d="M860 720L1000 650L1150 620L1165 880L1140 940L980 870L840 840ZM1190 1000L1300 1120L1400 1190L1568 1110V1530H1000L850 1510L950 1320L1060 1150L1150 960Z"/>
                <path fill="url(#g5)" d="M0 1250L160 1215L300 1185L620 1330L600 1530H0ZM330 1150L400 900L500 940L700 940L680 1220L450 1180ZM740 1180L980 1200L900 1370L720 1320ZM740 1000L980 1000L1040 1070L970 1170L720 1110Z"/>
                <path fill="url(#g6)" d="M1130 -8H1400L1560 200V350L1420 420L1200 330ZM1420 480L1568 520V720L1440 740Z"/>
                <path fill="#efdfc8" d="M1120 330L1180 350L1150 430L1165 535H1145L1110 410ZM1130 620H1175L1190 820L1160 825ZM800 755H855V880L820 1070H765L800 960L790 860L830 850ZM1110 100L1130 100L1135 180H1115Z"/>
                <path fill="none" stroke="#efdfc8" stroke-width="16" d="M1005 1350L1262 1120"/>
                <path fill="none" stroke="#e0ebc4" stroke-width="5" d="M140 145L180 140L175 170L145 165ZM1002 1018H1048V1040L1005 1038ZM168 565L226 570L222 592L172 595Z"/>
                <g fill="none" stroke="#fff">
                  <path stroke-width="24" d="M1568 392L1450 430L1280 540L1100 620L850 710L770 780L735 860L710 1000L685 1200L640 1350L595 1535M240 1205L500 1280L640 1318L850 1360L970 1410L1120 1530"/>
                  <path stroke-width="14" d="M0 -8L110 380L210 760L270 1020L320 1180L420 1530M268 -8L320 270L365 490L440 600L475 770L505 940L450 1190L380 1530M0 1240L160 1200L300 1170L420 1165L560 1190L700 1220L800 1260L940 1310L1010 1350L1060 1400L1090 1480M1115 100L1140 400L1160 620L1175 880"/>
                  <path stroke-width="12" d="M0 340L250 280L600 235L690 60L620 240L575 340L545 490L520 530L440 600L200 720L0 775M1420 0L1400 20L1370 95L1140 420L990 640L830 840M1390 480L1300 640L1170 890L1050 1150L830 1530M940 -8L890 380L850 680L830 830L790 1050L680 1530M560 500L565 560L615 800L690 910L710 960M320 1180L30 1530"/>
                  <path stroke-width="10" d="M530 520L420 790L320 1140L200 1530M0 495L140 465M140 502L400 465L900 385L1200 335M690 100L730 430L770 740L800 1000M640 210L800 190L920 175M1130 120L1390 105L1470 140L1560 210M430 785L760 745L850 740M650 850L740 835L850 850L980 880L1140 950L1200 990L1280 1090L1340 1150L1400 1180M1190 855H1240L1400 780L1490 760L1560 720M340 1070L650 1120L820 1150L970 1180M0 1140L260 1090M0 780L50 860L130 1150L150 1200M880 1430L1100 1300L1290 1110M1090 1480L1200 1430L1568 1320M1400 1180L1430 1300L1370 1530M1340 1150L1400 1110L1568 1095M0 1310L20 1400L10 1530M1335 0L1360 90M560 240L580 400M660 1200L700 1320L640 1500"/>
                  <path stroke-width="5" d="M1285 700L1390 770M850 720L920 715L860 830M1500 100L1540 180M1450 -8L1480 15L1540 0"/>
                </g>
              </g>

              <!-- place names -->
              <g transform="translate(0 0.8)" fill="none" stroke-linejoin="round" paint-order="stroke" stroke="#fff" stroke-opacity=".72" stroke-width="6" font-size="35">
                <g fill="#4a6a93" font-style="italic" text-anchor="middle" font-size="35.400"><text x="1937.800" y="1015.400">Albany</text><text x="1937.600" y="1050.500">Mudflats State</text><text x="1939.500" y="1085">Marine Park</text></g>
                <g fill="#5d4c2a"><text x="2157.500" y="1180">Albany</text><text x="2325" y="2283.700" textLength="157">Emeryville</text></g>
                <g fill="#3f3f3f"><text x="1684.800" y="1222" textLength="294">Golden Gate Fields</text><text x="3031.500" y="1338.400">Lawrence Hall</text><g text-anchor="middle"><text x="2824" y="1367.500">University of</text><text x="2824.600" y="1402.600">California,</text><text x="2824.700" y="1437.200">Berkeley</text></g></g>
                <g fill="#418912" font-style="italic" text-anchor="middle"><text x="2034.500" y="1519.400">McLaughlin</text><text x="2034" y="1554">Eastshore</text><text x="2034.500" y="1589">State Park</text><text x="3076" y="1045">Tilden</text></g>
                <g fill="#418912" font-style="italic"><text x="2970.500" y="1080.100">Regional Park</text><text x="3080" y="1381.800">University</text><text x="3062" y="1416.900">of California</text><text x="3083" y="1451.400">Botanical</text><text x="3070" y="1486.500">Garden</text><text x="3113" y="1531">Claremont</text><text x="3125" y="1601">Regional</text><text x="3125" y="1635.700">Preserve</text></g>
                <g fill="#418912"><text x="2670.500" y="1160.200" textLength="367">Tilden Park Golf Course</text><text x="3071" y="2264.300">Mountain View</text></g>
                <text x="2510" y="1485.400" font-size="41" font-weight="500" fill="#5d4c2a" textLength="182">Berkeley</text>
                <g fill="#9a7f5c" font-size="32.500" font-weight="500" text-anchor="middle">
                  <text x="2227.800" y="1416.900">NORTHWEST</text><text x="2227.600" y="1449.200">BERKELEY</text><text x="2583" y="1373">NORTH</text><text x="2584.500" y="1404.800">BERKELEY</text><text x="2916.800" y="1566.600">SOUTHSIDE</text><text x="2627.700" y="1686.700">SOUTH</text><text x="2629" y="1718.300">BERKELEY</text><text x="2909.600" y="1769.900">ELMWOOD</text><text x="2695" y="1985.200">BUSHROD</text><text x="2961.700" y="2022.900">ROCKRIDGE</text><text x="2472" y="2118.900">GASKILL</text><text x="2783.600" y="2233.700">TEMESCAL</text><text x="2916" y="2355.300">PIEDMONT</text><text x="2916.500" y="2387.400">AVENUE</text>
                </g>
              </g>

              <!-- points of interest -->
              <g transform="translate(2003.300 1209.500)"><use href="#disc"/><path fill="#8f6f64" d="M-9 10H-12V7H-9V0H-11V-5H-8V-2H-5V-5H-1V-12H6V-8H1V-5H5V-2H8V-5H11V0H9V7H12V10ZM-3 1V6H3V1Z" fill-rule="evenodd"/></g>
              <g transform="translate(3062.400 1148.100)"><use href="#disc"/><path fill="none" stroke="#6fb23c" stroke-width="3.200" d="M-8 -10H7M6 -9L-3 -4L-6 2V10M-2 0L3 10"/><circle cx="7" cy="9" r="2" fill="#6fb23c"/></g>
              <g transform="translate(3009.900 1326.900)"><use href="#disc"/><path fill="none" stroke="#8f6f64" stroke-width="2.600" d="M-11 -5L0 -10L11 -5ZM-9 -3V8M9 -3V8M-11 9H11M-4 -1V5L4 -1V5"/></g>
              <g transform="translate(2957.300 1384)"><use href="#disc"/><path fill="#8f6f64" d="M-12 -6L0 -12L12 -6V-3H-12ZM-10 -1h4v7h-4zM-2 -1h4v7h-4zM6 -1h4v7h-4zM-11 7h22v3h-22z"/></g>
              <g transform="translate(2823.700 1466.200)"><use href="#disc"/><path fill="#8f6f64" d="M-12 -3L0 -9L12 -3V6H10V-1L0 4ZM-7 2L0 6L7 2V7L0 11L-7 7Z"/></g>
              <g transform="translate(2946.100 1482.100)"><use href="#disc"/><path fill="#8f6f64" d="M-12 -6Q-8 -7 -6 -2Q-2 3 3 1Q7 -3 12 0V8Q6 6 3 9H-9Q-13 6 -12 -6ZM2 -8l9-2v2l-8 2zM3 -4l8-2v2l-7 2z"/></g>
              <g transform="translate(3048.700 2253.200)"><use href="#disc"/><path fill="#6fae3e" d="M-3 -12L5 -1H2L6 5H-1V8H4V4H6V8H8V5H10V8H11V10H-10V8H-5V5H-11L-7 -1H-10Z"/></g>
              <use href="#bus" x="2160.700" y="1555.600"/><use href="#bus" x="2301.900" y="2090"/>
              <use href="#bart" x="2190.500" y="854.700"/><use href="#bart" x="2643.600" y="1844.800"/>

              <!-- feature pins, north to south -->
              <g transform="translate(0 0.8)"><use href="#pr" x="2508.900" y="1488.200"/><use href="#pr" x="2416.500" y="1498.600"/><use href="#pr" x="2300.300" y="1545.700"/><use href="#pr" x="2253.300" y="1553.400"/><use href="#pr" x="2107.900" y="1565.500"/><use href="#pb" x="1995.400" y="1597.900"/><use href="#pr" x="1898.200" y="1645.600"/><use href="#pr" x="2856.300" y="1688.900"/><use href="#pr" x="2890" y="1771"/><use href="#pr" x="2626.200" y="1773.200"/><use href="#pr" x="2440.500" y="1798.200"/><use href="#pr" x="2623.700" y="1812"/><use href="#pr" x="2586.400" y="1819.800"/><use href="#pr" x="2707.300" y="1844.200"/></g>
              <path fill="url(#hs)" d="M1536 838h1600v18h-1600z"/>
              <path fill="#5a5f80" fill-opacity=".08" d="M1536 838h12v1692h-12zM3126 838h10v1692h-10z"/>
            </svg>
          </section>

          <!-- feature list -->
          <aside class="flex-1 border-l-[2.2px] border-[#dfe0e7] bg-[#fafafd] text-[31.2px] whitespace-nowrap">
            <div class="h-[106px] bg-white border-b-[2.3px] border-[#e1e1e9] flex font-semibold tracking-[0.95px]">
              <div class="ml-[79px] w-[258px] border-b-[7.800px] border-[#6c8cec] flex items-center pl-[36.700px] pb-[2px] text-[#333]"><svg class="w-[17.800px] h-[26.300px]"><use href="#marker"/></svg><span class="ml-[8.800px]">FEATURES</span></div>
              <div class="ml-[110px] flex items-center pb-[10px] text-[#8a8a8a]"><svg class="w-[37px] h-[31px]" viewBox="0 0 37 31" fill="#a5a6a8" stroke="#a5a6a8" stroke-linejoin="round"><path stroke-width="1.500" d="M18.500 1L36 8.500L18.500 16.500L1 8.500Z"/><path stroke-width="1.500" d="M1 16.500L6 16L18.500 21.500L31 16L36 16.500V22.500L18.500 30L1 22.500Z"/></svg><span class="ml-[12.500px]">STYLE</span></div>
            </div>
            <div class="h-[91.2px] bg-white border-b-[2.3px] border-[#e1e1e9] flex items-center pl-[36.800px] pb-[4px] text-[#6c8cec] text-[30.600px] font-bold"><svg class="w-[24.500px] h-[24.500px]"><use href="#plus"/></svg><span class="ml-[14px]">NEW FEATURE</span></div>
            <div class="h-[94.5px] bg-white border-b-[2.3px] border-[#e1e1e9] flex items-center justify-between pl-[36px] pr-[36.300px]"><span>Public Art</span><svg class="w-[24.200px] h-[24.200px] text-[#e3e4ea] mb-[9px]"><use href="#plus"/></svg></div>
            <div class="h-[94.55px] bg-[#7b9ae0] border-b-[2.3px] border-[#e6e6ea] flex items-center pl-[57px] text-white font-semibold tracking-[-0.65px]"><svg class="w-[23px] h-[33.500px] text-[#a3b9eb] mt-[6px]"><use href="#marker"/></svg><span class="ml-[28.500px] mt-[3px]">We Only Come Out At Night</span></div>
            <div id="features"></div>
            <div class="h-[93.8px] bg-white border-b-[2.3px] border-[#e1e3ec] flex items-center justify-between pl-[36px] pr-[36.300px]"><span class="mt-px">Map Images</span><svg class="w-[24.200px] h-[24.200px] text-[#e3e4ea] mb-[7px]"><use href="#plus"/></svg></div>
          </aside>
        </div>
      </div>
    </main>

    <p class="mt-[118.500px] ml-[62.500px] w-[1000px] text-[68px] leading-[81.6px] text-black whitespace-nowrap">Users can create custom sites,<br>including media, properties,<br>descriptions, and tags, in this<br>panel</p>
  </div>
</div>
<script>
  const names = ["Ledger's Liquors of Berkeley", "REALM Butterflies", "Vivir Sin Fronteras", "Berkeley Big People", "Callope", "Unique and Everyday Kids", "Ashby Mural", "Malcolm X Elementary", "Fired clay sculpture", "Bookshelves", "La Peña", "Bookshelves"];
  document.getElementById('features').innerHTML = names.map(n => `<div class="h-[94.55px] border-b-[2.3px] border-[#e9e9ec] flex items-center pl-[57px]"><svg class="w-[23px] h-[33.500px] text-[#ee877e] mt-[6px]"><use href="#marker"/></svg><span class="ml-[20px] mt-[2.500px]">${n}</span></div>`).join('');
</script>
</body>
</html>
